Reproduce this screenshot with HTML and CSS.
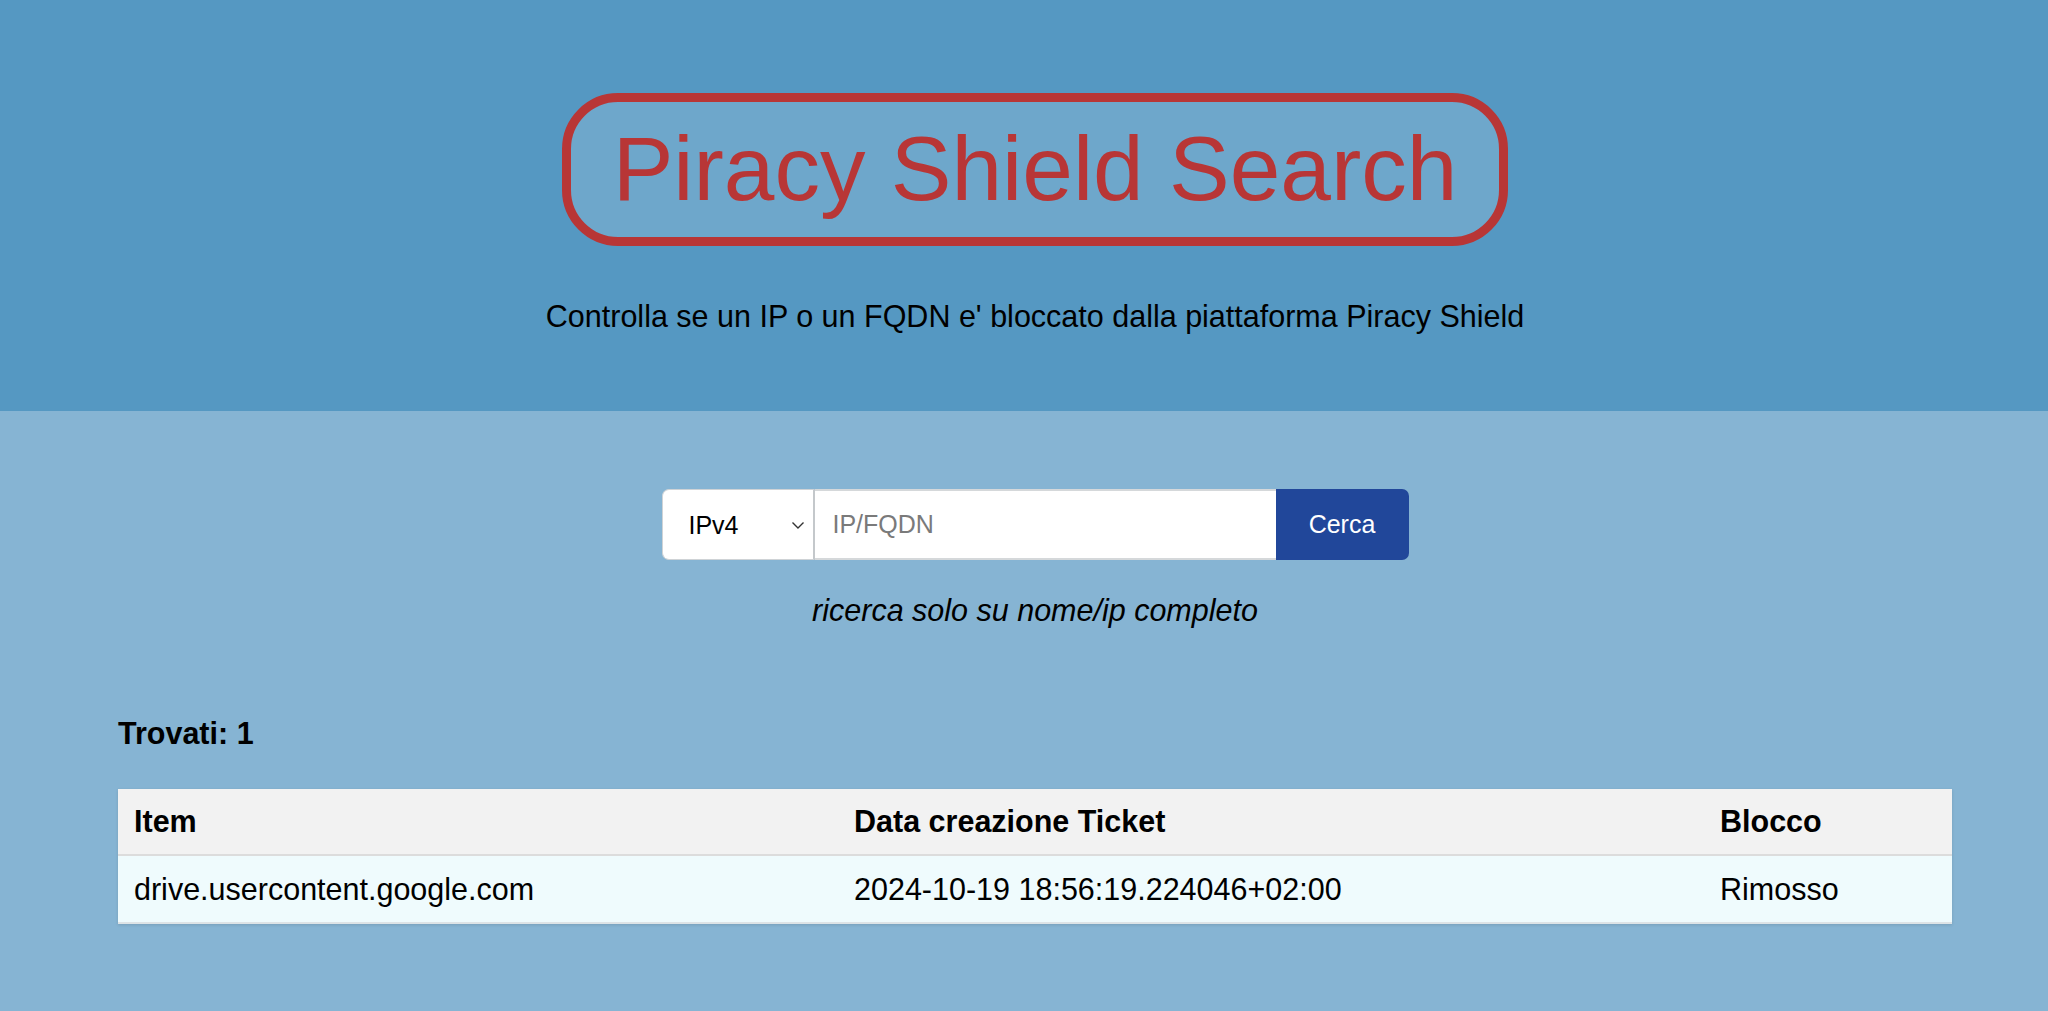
FILE: index.html
```html
<!DOCTYPE html>
<html lang="it">
<head>
<meta charset="utf-8">
<title>Piracy Shield Search</title>
<link rel="stylesheet" href="styles.css">
</head>
<body>
<header class="hero">
  <h1 class="title">Piracy Shield Search</h1>
  <p class="subtitle">Controlla se un IP o un FQDN e' bloccato dalla piattaforma Piracy Shield</p>
</header>
<main class="content">
  <form class="search">
    <div class="select-wrap">
      <select class="type-select">
        <option>IPv4</option>
        <option>IPv6</option>
        <option>FQDN</option>
      </select>
      <svg class="chevron" width="14" height="9" viewBox="0 0 14 9"><path d="M1.5 1.5 L7 7 L12.5 1.5" fill="none" stroke="#333" stroke-width="1.4"/></svg>
    </div>
    <input class="query" type="text" placeholder="IP/FQDN">
    <button class="submit" type="button">Cerca</button>
  </form>
  <p class="hint">ricerca solo su nome/ip completo</p>
  <p class="count">Trovati: 1</p>
  <table class="results">
    <thead>
      <tr><th class="c-item">Item</th><th class="c-date">Data creazione Ticket</th><th class="c-block">Blocco</th></tr>
    </thead>
    <tbody>
      <tr><td>drive.usercontent.google.com</td><td>2024-10-19 18:56:19.224046+02:00</td><td>Rimosso</td></tr>
    </tbody>
  </table>
</main>
</body>
</html>
```

FILE: styles.css
```css
html, body {
  margin: 0;
  padding: 0;
}
body {
  font-family: "Liberation Sans", Arial, Helvetica, sans-serif;
  font-size: 30.5px;
  color: #000;
  background: #86b4d3;
  min-height: 1011px;
}
.hero {
  background: #5598c2;
  padding: 93px 0 77px 22px;
  text-align: center;
}
.title {
  display: inline-block;
  margin: 0;
  font-size: 91px;
  font-weight: normal;
  line-height: 105px;
  color: #b83636;
  background: #6ea7cb;
  border: 9px solid #b83636;
  border-radius: 56px;
  padding: 14px 42px 16px;
}
.subtitle {
  margin: 53px 0 0;
  line-height: 35px;
}
.content {
  padding: 78px 0 60px 22px;
}
.search {
  display: flex;
  justify-content: center;
  height: 71px;
  margin: 0;
}
.select-wrap {
  position: relative;
  width: 153px;
  height: 71px;
  flex: none;
}
.type-select {
  appearance: none;
  -webkit-appearance: none;
  width: 100%;
  height: 100%;
  box-sizing: border-box;
  border: 1px solid #cfd3d6;
  border-right: 2px solid #c4c8cb;
  border-radius: 7px 0 0 7px;
  background: #fff;
  font-family: "Liberation Sans", Arial, sans-serif;
  font-size: 25px;
  color: #000;
  padding: 0 0 0 26px;
  outline: none;
}
.chevron {
  position: absolute;
  right: 10px;
  top: 32px;
  pointer-events: none;
}
.query {
  width: 461px;
  height: 71px;
  box-sizing: border-box;
  border: 2px solid #d5d8da;
  border-left: none;
  border-right: none;
  background: #fff;
  font-family: "Liberation Sans", Arial, sans-serif;
  font-size: 25px;
  padding: 0 18px;
  outline: none;
  flex: none;
}
.query::placeholder {
  color: #7a7a7a;
}
.submit {
  width: 133px;
  height: 71px;
  border: none;
  border-radius: 0 7px 7px 0;
  background: #21479a;
  color: #fff;
  font-family: "Liberation Sans", Arial, sans-serif;
  font-size: 25px;
  padding: 0;
  flex: none;
}
.hint {
  margin: 33px 0 0;
  text-align: center;
  font-style: italic;
  line-height: 35px;
}
.count {
  margin: 88px 0 0 96px;
  font-weight: bold;
  line-height: 35px;
}
.results {
  margin: 38px 96px 0;
  width: calc(100% - 192px);
  table-layout: fixed;
  border-collapse: collapse;
  box-shadow: 0 1px 3px rgba(0, 0, 0, 0.12);
}
.results th,
.results td {
  box-sizing: border-box;
  text-align: left;
  padding: 15px 15px 15px 16px;
  line-height: 35px;
}
.results th {
  background: #f2f2f2;
  font-weight: bold;
  border-bottom: 2px solid #dcdcdc;
}
.results td {
  background: #effbfd;
  border-bottom: 2px solid #dde3e6;
  padding-top: 16px;
}
.c-item { width: 720px; }
.c-date { width: 866px; }
```
